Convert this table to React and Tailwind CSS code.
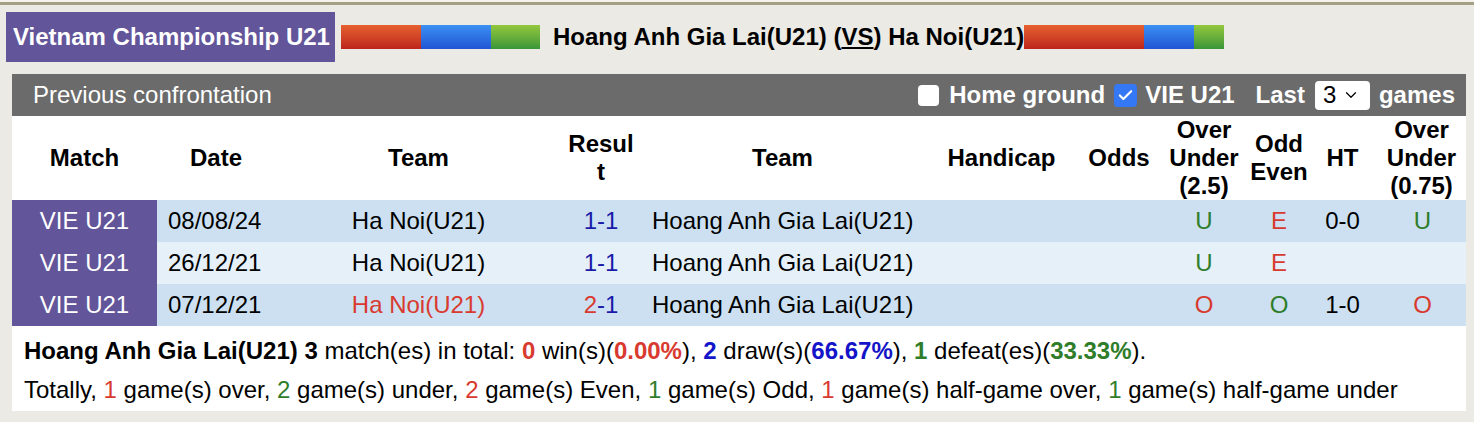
import { Check, ChevronDown } from "lucide-react";

const rows = [
  { date: "08/08/24", home: "Ha Noi(U21)", homeRed: false, hs: "1", as: "1", hsRed: false, ou: "U", oe: "E", ht: "0-0", ou2: "U" },
  { date: "26/12/21", home: "Ha Noi(U21)", homeRed: false, hs: "1", as: "1", hsRed: false, ou: "U", oe: "E", ht: "", ou2: "" },
  { date: "07/12/21", home: "Ha Noi(U21)", homeRed: true, hs: "2", as: "1", hsRed: true, ou: "O", oe: "O", ht: "1-0", ou2: "O" },
];

const RED = "text-[#d93a2f]";
const GREEN = "text-[#2f7d2a]";

// letters on the right: U/O and E/O, colour by meaning
const ouColor = (v) => (v === "O" ? RED : GREEN);
const oeColor = (v) => (v === "E" ? RED : GREEN);

function Bar({ r, b, g }) {
  return (
    <div className="flex h-[24px]">
      <div className={`${r} bg-gradient-to-b from-[#e6602f] to-[#bd231d]`} />
      <div className={`${b} bg-gradient-to-b from-[#3d90f2] to-[#2354d4]`} />
      <div className={`${g} bg-gradient-to-b from-[#93c83e] to-[#389637]`} />
    </div>
  );
}

export default function App() {
  return (
    <div className="w-[1474px] h-[422px] bg-[#ebeae4] font-['Liberation_Sans',Arial,sans-serif] text-black overflow-hidden">
      {/* top rule */}
      <div className="h-[2px] bg-[#f4f3ee]" />
      <div className="h-[3px] bg-[#a59f84]" />

      {/* title row */}
      <div className="flex items-center pl-[6px] mt-[7px] h-[50px]">
        <div className="h-full w-[329px] pl-[7px] bg-[#62559a] text-white text-[24px] font-bold flex items-center whitespace-nowrap">
          Vietnam Championship U21
        </div>
        <div className="ml-[6px]">
          <Bar r="w-[80px]" b="w-[70px]" g="w-[49px]" />
        </div>
        <div className="ml-[13px] text-[24px] font-bold">
          Hoang Anh Gia Lai(U21) (<span className="underline underline-offset-2">VS</span>) Ha Noi(U21)
        </div>
        <Bar r="w-[120px]" b="w-[50px]" g="w-[30px]" />
      </div>

      {/* panel */}
      <div className="ml-[12px] mr-[8px] mt-[12px] bg-white">
        <div className="h-[42px] bg-[#6b6b6b] text-white flex items-center pl-[21px] pr-[11px]">
          <span className="text-[24px]">Previous confrontation</span>
          <div className="ml-auto flex items-center text-[24px] font-bold">
            <span className="w-[21px] h-[21px] rounded-[4px] bg-white" />
            <span className="ml-[10px]">Home ground</span>
            <span className="ml-[9px] w-[23px] h-[23px] rounded-[4px] bg-[#3478f6] flex items-center justify-center">
              <Check size={17} strokeWidth={3} className="text-white" />
            </span>
            <span className="ml-[8px]">VIE U21</span>
            <span className="ml-[21px]">Last</span>
            <span className="ml-[10px] w-[55px] h-[29px] rounded-[4px] bg-white text-black font-normal flex items-center pl-[8px] gap-[6px]">
              <span className="text-[24px]">3</span>
              <ChevronDown size={18} strokeWidth={1.6} />
            </span>
            <span className="ml-[9px]">games</span>
          </div>
        </div>

        <table className="w-full table-fixed border-collapse text-[24px]">
          <colgroup>
            <col className="w-[145px]" />
            <col className="w-[118px]" />
            <col className="w-[287px]" />
            <col className="w-[78px]" />
            <col className="w-[285px]" />
            <col className="w-[153px]" />
            <col className="w-[82px]" />
            <col className="w-[88px]" />
            <col className="w-[62px]" />
            <col className="w-[65px]" />
            <col />
          </colgroup>
          <thead>
            <tr className="h-[84px] font-bold leading-[28px] text-center align-middle">
              <th className="px-1">Match</th>
              <th className="px-1">Date</th>
              <th className="px-1">Team</th>
              <th className="px-1 break-all">Result</th>
              <th className="px-1">Team</th>
              <th className="px-1">Handicap</th>
              <th className="px-1">Odds</th>
              <th className="px-1">Over Under (2.5)</th>
              <th className="px-0">Odd Even</th>
              <th className="px-1">HT</th>
              <th className="px-1 pl-[6px]">Over Under (0.75)</th>
            </tr>
          </thead>
          <tbody>
            {rows.map((r, i) => (
              <tr key={i} className={`h-[42px] ${i % 2 === 1 ? "bg-[#e5f0f9]" : "bg-[#cce0f1]"}`}>
                <td className="bg-[#62559a] text-white text-center">VIE U21</td>
                <td className="pl-[11px]">{r.date}</td>
                <td className={`text-center ${r.homeRed ? RED : ""}`}>{r.home}</td>
                <td className="text-center text-[#1a1aa8]">
                  <span className={r.hsRed ? RED : ""}>{r.hs}</span>-{r.as}
                </td>
                <td className="pl-[12px]">Hoang Anh Gia Lai(U21)</td>
                <td />
                <td />
                <td className={`text-center ${ouColor(r.ou)}`}>{r.ou}</td>
                <td className={`text-center ${oeColor(r.oe)}`}>{r.oe}</td>
                <td className="text-center">{r.ht}</td>
                <td className={`text-center pl-[4px] ${ouColor(r.ou2)}`}>{r.ou2}</td>
              </tr>
            ))}
          </tbody>
        </table>

        {/* summary */}
        <div className="pl-[12px] pt-[5px] pb-[2px] text-[24px] leading-[39px]">
          <div>
            <b>Hoang Anh Gia Lai(U21) 3</b> match(es) in total: <b className={RED}>0</b> win(s)(
            <b className={RED}>0.00%</b>), <b className="text-[#1414c8]">2</b> draw(s)(
            <b className="text-[#1414c8]">66.67%</b>), <b className={GREEN}>1</b> defeat(es)(
            <b className={GREEN}>33.33%</b>).
          </div>
          <div>
            Totally, <span className={RED}>1</span> game(s) over, <span className={GREEN}>2</span> game(s) under,{" "}
            <span className={RED}>2</span> game(s) Even, <span className={GREEN}>1</span> game(s) Odd,{" "}
            <span className={RED}>1</span> game(s) half-game over, <span className={GREEN}>1</span> game(s) half-game under
          </div>
        </div>
      </div>
    </div>
  );
}
